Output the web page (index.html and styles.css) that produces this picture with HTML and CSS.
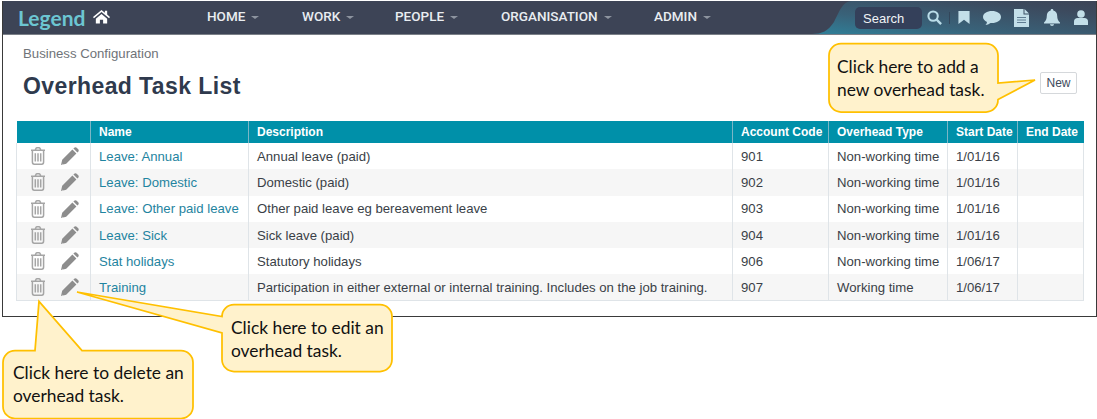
FILE: index.html
```html
<!DOCTYPE html>
<html lang="en">
<head>
<meta charset="utf-8">
<title>Overhead Task List</title>
<link rel="stylesheet" href="styles.css">
</head>
<body>
<svg class="defs" width="0" height="0" aria-hidden="true">
  <symbol id="trash" viewBox="0 0 16 18">
    <path d="M5.300 2.600 6 1.400C6.200 1 6.600.8 7 .8h2c.4 0 .8.2 1 .6l.7 1.200M1 3.200h14M2.400 3.600v11.400c0 1.200.8 2.200 1.800 2.200h7.600c1 0 1.800-1 1.800-2.200V3.600" fill="none" stroke="currentColor" stroke-width="1.500"/>
    <path d="M5.300 6.300v8.200M8 6.300v8.200M10.700 6.300v8.200" fill="none" stroke="currentColor" stroke-width="1.500"/>
  </symbol>
  <symbol id="pencil" viewBox="0 0 18 18">
    <path d="M0 18l1.200-5.200L11.400 2.600l4 4L5.200 16.800zM12.400 1.600l.8-.8c.7-.7 1.800-.7 2.500 0l1.500 1.500c.7.700.7 1.800 0 2.500l-.8.8z" fill="currentColor"/>
    <path d="M1.600 16.400l1 1L1 18z" fill="#fff" opacity=".5"/>
  </symbol>
</svg>
<div class="frame">
  <header class="nav">
    <div class="brand">
      <span class="logo">Legend</span>
      <svg class="home" viewBox="0 0 18 15" aria-hidden="true"><path d="M9 .5 0 8l1 1.300L9 2.700l8 6.600L18 8l-3-2.500V1.300h-2.400v2.200zM3 9.800V15h4.300v-4h3.400v4H15V9.800L9 4.800z" fill="#fff"/></svg>
    </div>
    <nav class="menu">
      <span class="menu-item">HOME<i class="caret"></i></span>
      <span class="menu-item">WORK<i class="caret"></i></span>
      <span class="menu-item">PEOPLE<i class="caret"></i></span>
      <span class="menu-item">ORGANISATION<i class="caret"></i></span>
      <span class="menu-item">ADMIN<i class="caret"></i></span>
    </nav>
    <div class="tools">
      <svg class="swoosh" viewBox="0 0 284 33" preserveAspectRatio="none" aria-hidden="true">
        <defs><linearGradient id="sw" x1="0" x2="1" y1="1" y2="0"><stop offset="0" stop-color="#2f8099"/><stop offset=".35" stop-color="#396279"/><stop offset=".8" stop-color="#3c4a5e"/><stop offset="1" stop-color="#3d4456"/></linearGradient></defs>
        <path d="M0 33c10 0 16-3 22-12C27 12 30 0 40 0h244v33z" fill="url(#sw)"/>
      </svg>
      <span class="search">Search</span>
      <svg class="tool tool-search" viewBox="0 0 16 16" aria-hidden="true"><circle cx="6.500" cy="6.500" r="5" fill="none" stroke="#b9dce8" stroke-width="2.200"/><path d="M10.300 10.300 15 15" stroke="#b9dce8" stroke-width="2.600"/></svg>
      <i class="divider"></i>
      <svg class="tool tool-mark" viewBox="0 0 12 14" aria-hidden="true"><path d="M0 0h12v14L6 9.500 0 14z" fill="#c3dfe9"/></svg>
      <svg class="tool tool-chat" viewBox="0 0 18 14" aria-hidden="true"><path d="M9 0c5 0 9 2.500 9 6s-4 6-9 6H7.500C6 13.300 4 14 2.500 14 3.500 13 4 12 4 10.900 1.600 9.900 0 8.100 0 6c0-3.500 4-6 9-6z" fill="#c3dfe9"/></svg>
      <svg class="tool tool-doc" viewBox="0 0 15 18" aria-hidden="true"><path d="M0 0h9.500v5.500H15V18H0z" fill="#c3dfe9"/><path d="M10.500 0 15 4.500h-4.500z" fill="#c3dfe9"/><path d="M3 8.500h9M3 11h9M3 13.500h9" stroke="#5f7c92" stroke-width="1"/></svg>
      <svg class="tool tool-bell" viewBox="0 0 16 17" aria-hidden="true"><path d="M8 0c1 0 1.300.6 1.300 1.400C12 2 13.200 4 13.200 7c0 3 1 4.800 2.800 6.600v.9H0v-.9C1.800 11.800 2.800 10 2.800 7c0-3 1.200-5 3.900-5.600C6.700.6 7 0 8 0zM6 15.300h4C10 16.300 9 17 8 17s-2-.7-2-1.700z" fill="#c3dfe9"/></svg>
      <svg class="tool tool-user" viewBox="0 0 14 15" aria-hidden="true"><circle cx="7" cy="4" r="3.800" fill="#c3dfe9"/><path d="M0 15v-3.500C0 9.500 1.500 8 3.500 8h7c2 0 3.500 1.500 3.500 3.500V15z" fill="#c3dfe9"/></svg>
    </div>
  </header>
  <main class="content">
    <div class="page-head">
      <div class="titles">
        <p class="crumb">Business Configuration</p>
        <h1 class="title">Overhead Task List</h1>
      </div>
      <button class="btn-new" type="button">New</button>
    </div>
    <table class="tasks">
      <colgroup>
        <col class="c-actions"><col class="c-name"><col class="c-desc"><col class="c-code"><col class="c-type"><col class="c-start"><col class="c-end">
      </colgroup>
      <thead>
        <tr><th></th><th>Name</th><th>Description</th><th>Account Code</th><th>Overhead Type</th><th>Start Date</th><th>End Date</th></tr>
      </thead>
      <tbody>
        <tr><td class="acts"><svg class="ic-trash"><use href="#trash"/></svg><svg class="ic-pencil"><use href="#pencil"/></svg></td><td class="link">Leave: Annual</td><td>Annual leave (paid)</td><td>901</td><td>Non-working time</td><td>1/01/16</td><td></td></tr>
        <tr><td class="acts"><svg class="ic-trash"><use href="#trash"/></svg><svg class="ic-pencil"><use href="#pencil"/></svg></td><td class="link">Leave: Domestic</td><td>Domestic (paid)</td><td>902</td><td>Non-working time</td><td>1/01/16</td><td></td></tr>
        <tr><td class="acts"><svg class="ic-trash"><use href="#trash"/></svg><svg class="ic-pencil"><use href="#pencil"/></svg></td><td class="link">Leave: Other paid leave</td><td>Other paid leave eg bereavement leave</td><td>903</td><td>Non-working time</td><td>1/01/16</td><td></td></tr>
        <tr><td class="acts"><svg class="ic-trash"><use href="#trash"/></svg><svg class="ic-pencil"><use href="#pencil"/></svg></td><td class="link">Leave: Sick</td><td>Sick leave (paid)</td><td>904</td><td>Non-working time</td><td>1/01/16</td><td></td></tr>
        <tr><td class="acts"><svg class="ic-trash"><use href="#trash"/></svg><svg class="ic-pencil"><use href="#pencil"/></svg></td><td class="link">Stat holidays</td><td>Statutory holidays</td><td>906</td><td>Non-working time</td><td>1/06/17</td><td></td></tr>
        <tr><td class="acts"><svg class="ic-trash"><use href="#trash"/></svg><svg class="ic-pencil"><use href="#pencil"/></svg></td><td class="link">Training</td><td>Participation in either external or internal training. Includes on the job training.</td><td>907</td><td>Working time</td><td>1/06/17</td><td></td></tr>
      </tbody>
    </table>
  </main>
</div>

<svg class="callout-shapes" width="1097" height="419" aria-hidden="true">
  <path d="M841 43.500h145a12 12 0 0 1 12 12v27.500l37-3-37 19.500v.5a12 12 0 0 1 -12 12H841a12 12 0 0 1 -12-12V55.500a12 12 0 0 1 12-12z"/>
  <path d="M234 304.500h146a12 12 0 0 1 12 12v43a12 12 0 0 1 -12 12H234a12 12 0 0 1 -12-12v-26.500L77 292l145 24.500a12 12 0 0 1 12-12z"/>
  <path d="M15 350.500h20l4-49 43 49h99a12 12 0 0 1 12 12v44a12 12 0 0 1 -12 12H15a12 12 0 0 1 -12-12v-44a12 12 0 0 1 12-12z"/>
</svg>
<p class="note note-new">Click here to add a<br>new overhead task.</p>
<p class="note note-edit">Click here to edit an<br>overhead task.</p>
<p class="note note-del">Click here to delete an<br>overhead task.</p>
</body>
</html>
```
FILE: styles.css
```css
* { box-sizing: border-box; }
html, body { margin: 0; padding: 0; }
body {
  width: 1097px;
  height: 419px;
  overflow: hidden;
  background: #fff;
  font-family: "Liberation Sans", Arial, sans-serif;
  position: relative;
}
.defs { position: absolute; }

.frame {
  margin: 1px 0 0 2px;
  width: 1095px;
  height: 316px;
  border: 1px solid #3a3a3a;
  border-top: 0;
  background: #fff;
}

.nav {
  display: flex;
  align-items: center;
  height: 34px;
  background: #3d4456;
  border-bottom: 1px solid #7b8088;
  position: relative;
}
.brand { display: flex; align-items: center; width: 204px; padding-left: 15px; }
.logo {
  font-family: Lato, sans-serif;
  font-size: 21px;
  font-weight: 700;
  letter-spacing: 0;
  color: #6cc6d2;
  line-height: 30px;
}
.home { width: 17px; height: 15px; margin-left: 8px; margin-top: -2px; }
.menu { display: flex; font-family: Roboto, sans-serif; font-size: 13.500px; font-weight: 500; color: #e9edf1; margin-top: -3px; }
.menu-item { white-space: nowrap; display: flex; align-items: center; }
.menu-item:nth-child(1) { width: 95px; }
.menu-item:nth-child(2) { width: 93px; }
.menu-item:nth-child(3) { width: 106px; }
.menu-item:nth-child(4) { width: 153px; }
.caret {
  display: inline-block;
  width: 0; height: 0;
  margin-left: 6px;
  margin-top: 2px;
  border-left: 4px solid transparent;
  border-right: 4px solid transparent;
  border-top: 3px solid #8d949f;
}
.tools {
  position: absolute;
  right: 0; top: 0;
  width: 284px;
  height: 33px;
  display: flex;
  align-items: center;
}
.swoosh { position: absolute; inset: 0; width: 100%; height: 100%; }
.search {
  position: relative;
  margin-left: 43px;
  width: 67px;
  height: 22px;
  background: #34405a;
  border-radius: 5px;
  color: #f0f3f6;
  font-size: 13px;
  line-height: 23px;
  padding-left: 8px;
}
.tool { position: relative; flex: none; }
.tool-search { width: 15px; height: 15px; margin-left: 5px; }
.divider { position: relative; width: 1px; height: 12px; background: #33465a; margin-left: 7px; }
.tool-mark { width: 12px; height: 13px; margin-left: 8px; }
.tool-chat { width: 18px; height: 14px; margin-left: 13px; }
.tool-doc { width: 15px; height: 18px; margin-left: 13px; }
.tool-bell { width: 16px; height: 17px; margin-left: 15px; }
.tool-user { width: 14px; height: 15px; margin-left: 14px; }

.content { padding: 0 12px 0 13px; }
.page-head { display: flex; justify-content: space-between; height: 86px; }
.crumb { margin: 12px 0 0 7px; font-size: 13.200px; line-height: 14px; color: #6f7378; }
.title { margin: 11px 0 0 7px; font-size: 23px; line-height: 28px; font-weight: 700; letter-spacing: .4px; color: #2f3a4d; }
.btn-new {
  margin: 37px 7px 0 0;
  width: 37px;
  height: 22px;
  padding: 0;
  background: #fff;
  border: 1px solid #d5d8db;
  border-radius: 2px;
  color: #3e4a5c;
  font: 12px "Liberation Sans", Arial, sans-serif;
}

.tasks {
  table-layout: fixed;
  border-collapse: collapse;
  width: 1067px;
  font-size: 13.170px;
  color: #3a3f47;
}
.c-actions { width: 74px; }
.c-name { width: 158px; }
.c-desc { width: 484px; }
.c-code { width: 96px; }
.c-type { width: 119px; }
.c-start { width: 70px; }
.c-end { width: 66px; }
.tasks th {
  height: 22px;
  padding: 0 0 0 8px;
  background: #0090a9;
  color: #fff;
  text-align: left;
  font-size: 12px;
  font-weight: 700;
  border-left: 1px solid #7bb6c6;
  white-space: nowrap;
}
.tasks th:first-child { border-left: 0; }
.tasks td {
  height: 26.300px;
  padding: 0 0 0 8px;
  border: 1px solid #dfe4e8;
  border-width: 0 1px;
  white-space: nowrap;
  vertical-align: middle;
}
.tasks tbody tr:last-child td { border-bottom-width: 1px; }
.tasks tbody tr:nth-child(even) td { background: #f6f6f6; }
.tasks td.link { color: #1f84a0; }
.tasks td.acts { padding: 0 0 0 13px; color: #a5a5a5; }
.acts svg { display: inline-block; vertical-align: middle; }
.ic-trash { width: 16px; height: 18px; }
.ic-pencil { width: 18px; height: 18px; margin-left: 15px; color: #8d8d8d; }

.callout-shapes { position: absolute; left: 0; top: 0; pointer-events: none; }
.callout-shapes path { fill: #fff2cc; stroke: #ffc000; stroke-width: 1.750; }
.note {
  position: absolute;
  margin: 0;
  font-family: Lato, sans-serif;
  font-size: 17.400px;
  line-height: 22.500px;
  color: #111;
  white-space: nowrap;
}
.note-new { left: 837px; top: 56px; }
.note-edit { left: 231px; top: 317px; }
.note-del { left: 13px; top: 362px; }
```
